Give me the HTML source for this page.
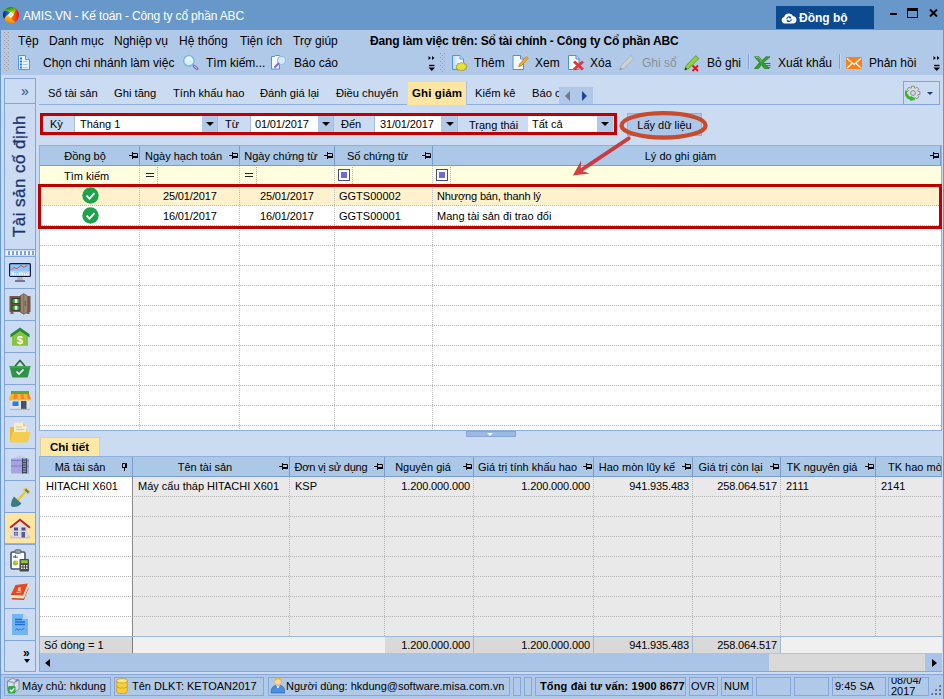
<!DOCTYPE html>
<html lang="vi">
<head>
<meta charset="utf-8">
<title>AMIS.VN - Kế toán - Công ty cổ phần ABC</title>
<style>
*{box-sizing:border-box;margin:0;padding:0}
html,body{width:944px;height:699px;overflow:hidden;background:#b1c9e8}
body{font-family:"Liberation Sans",sans-serif;font-size:12px;color:#000;position:relative}
.abs{position:absolute}
.t{position:absolute;white-space:nowrap;line-height:16px}
#title{left:0;top:0;width:944px;height:30px;background:#6898c9}
#title .cap{left:23px;top:8px;color:#fff;font-size:12px;letter-spacing:-0.15px}
#sync{left:776px;top:6px;width:98px;height:23px;background:#0b4a8f;color:#fff;font-weight:bold;font-size:12px}
#frameL{left:0;top:30px;width:1px;height:669px;background:#6898c9}
#frameR{left:943px;top:30px;width:1px;height:669px;background:#6898c9}
#menubg{left:1px;top:30px;width:942px;height:45px;background:#b1c9e8}
.menu{font-size:12px;top:33px}
.tb{font-size:12px;top:55px}
#work{left:1px;top:75px;width:942px;height:599px;background:#cbdbf1}
.grip{position:absolute;width:5px;height:17px;background-image:radial-gradient(circle,#8ea9cf 0.8px,transparent 1px);background-size:3px 3px}
#side{left:4px;top:78px;width:32px;height:594px;border:1px solid #82a5d9}
.sdiv{position:absolute;left:5px;width:30px;height:1px;background:#82a5d9}
.tab{font-size:11.2px;top:85px}
.g{position:absolute;font-size:11px;line-height:20px;white-space:nowrap;height:20px;overflow:hidden}
.hd{background:#acc8e7;border-right:1px solid #7a9cd3;border-bottom:1px solid #7a9cd3;text-align:center;line-height:20px}
.r{text-align:right;letter-spacing:-.12px}
.n{letter-spacing:-.14px}
.sp{position:absolute;top:677px;height:19px;border:1px solid #86a7d8;font-size:11px;line-height:17px;white-space:nowrap;overflow:hidden;background:#b1c9e8}
.lbl{position:absolute;font-size:11px;line-height:16px;white-space:nowrap;top:116px}
.inp{position:absolute;top:116px;height:16px;background:#fff;font-size:11px;line-height:16px;padding-left:4px;white-space:nowrap}
.dd{position:absolute;top:116px;height:16px;background:#b1c9e8}
.dd:after{content:"";position:absolute;left:50%;top:6px;margin-left:-4px;border:4px solid transparent;border-top:4px solid #000;border-bottom:0}
</style>
</head>
<body>
<div id="title" class="abs">
<div class="t cap">AMIS.VN - Kế toán - Công ty cổ phần ABC</div>
<div id="sync" class="abs">
<svg class="abs" style="left:5px;top:7px" width="16" height="11" viewBox="0 0 16 11"><path d="M3.800 10.500a3.300 3.300 0 0 1-.6-6.500 4.800 4.800 0 0 1 9-.8 3.700 3.700 0 0 1 .3 7.300z" fill="#fff"/><path d="M5.800 6.200a2.300 2.300 0 0 1 4-1.500M10.300 6.200a2.300 2.300 0 0 1-4 1.500" fill="none" stroke="#0b4a8f" stroke-width="1.100"/><path d="M9 3.200l1.600 2-2.300.3zM7 9.300l-1.600-2 2.300-.3z" fill="#0b4a8f"/></svg>
<div class="t" style="left:23px;top:4px">Đồng bộ</div>
</div>
<div class="abs" style="left:890px;top:13px;width:7px;height:2px;background:#000"></div>
<div class="abs" style="left:907px;top:8px;width:11px;height:10px;border:1px solid #000;border-top:3px solid #000"></div>
<svg class="abs" style="left:929px;top:9px" width="9" height="8" viewBox="0 0 9 8"><path d="M1 .5L8 7.500M8 .5L1 7.500" stroke="#000" stroke-width="2"/></svg>
</div>
<div id="frameL" class="abs"></div><div id="frameR" class="abs"></div>
<div id="menubg" class="abs"></div>
<svg class="abs" style="left:4px;top:32px" width="5" height="40" viewBox="0 0 5 40"><defs><pattern id="gp" width="5" height="4" patternUnits="userSpaceOnUse"><rect x="0" y="0" width="1" height="1" fill="#a3968f"/><rect x="4" y="0" width="1" height="1" fill="#a3968f"/><rect x="2" y="2" width="1" height="1" fill="#a3968f"/></pattern></defs><rect width="5" height="18" fill="url(#gp)"/><rect y="20" width="5" height="19" fill="url(#gp)"/></svg><svg class="abs" style="left:440px;top:53px" width="5" height="20" viewBox="0 0 5 20"><rect width="5" height="19" fill="url(#gp)"/></svg>
<div class="t menu" style="left:18px">Tệp</div>
<div class="t menu" style="left:49px">Danh mục</div>
<div class="t menu" style="left:114px">Nghiệp vụ</div>
<div class="t menu" style="left:179px">Hệ thống</div>
<div class="t menu" style="left:240px">Tiện ích</div>
<div class="t menu" style="left:293px">Trợ giúp</div>
<div class="t menu" style="left:370px;font-weight:bold;letter-spacing:-0.17px">Đang làm việc trên: Sổ tài chính - Công ty Cổ phần ABC</div>
<div class="t tb" style="left:43px">Chọn chi nhánh làm việc</div>
<div class="t tb" style="left:206px">Tìm kiếm...</div>
<div class="t tb" style="left:294px">Báo cáo</div>
<div class="t tb" style="left:474px">Thêm</div>
<div class="t tb" style="left:535px">Xem</div>
<div class="t tb" style="left:590px">Xóa</div>
<div class="t tb" style="left:642px;color:#8a8f98">Ghi sổ</div>
<div class="t tb" style="left:707px">Bỏ ghi</div>
<div class="t tb" style="left:778px">Xuất khẩu</div>
<div class="t tb" style="left:869px">Phản hồi</div>
<div id="work" class="abs"></div>
<div id="side" class="abs"></div>
<div class="sdiv" style="top:103px"></div>
<div class="sdiv" style="top:249px"></div>
<div class="t" style="left:21px;top:83px;font-size:14px;color:#2a4a8a">»</div>
<div class="t" style="left:-44px;top:166px;width:128px;text-align:center;font-size:17px;letter-spacing:.45px;line-height:20px;color:#17336e;-webkit-text-stroke:.3px #17336e;transform:rotate(-90deg)">Tài sản cố định</div>
<div class="abs" style="left:6px;top:251px;width:29px;height:4px;background:repeating-linear-gradient(90deg,#f2f6fc 0 2px,#7ea2dc 2px 4px)"></div>
<div class="sdiv" style="top:256px"></div>
<div class="sdiv" style="top:288px"></div>
<div class="sdiv" style="top:320px"></div>
<div class="sdiv" style="top:352px"></div>
<div class="sdiv" style="top:384px"></div>
<div class="sdiv" style="top:416px"></div>
<div class="sdiv" style="top:448px"></div>
<div class="sdiv" style="top:480px"></div>
<div class="sdiv" style="top:512px"></div>
<div class="sdiv" style="top:544px"></div>
<div class="sdiv" style="top:576px"></div>
<div class="sdiv" style="top:608px"></div>
<div class="sdiv" style="top:640px"></div>
<div class="abs" style="left:5px;top:513px;width:30px;height:31px;background:#fde5a2;border-bottom:1px solid #f5a04a"></div>
<div class="t" style="left:23px;top:645px;font-size:12px;font-weight:bold">»</div>
<div class="abs" style="left:24px;top:659px;border:3px solid transparent;border-top:4px solid #000;border-bottom:0"></div>
<div class="abs" style="left:39px;top:104px;width:864px;height:1px;background:#8fb0dc"></div>
<div class="abs" style="left:407px;top:81px;width:60px;height:24px;background:#fde6a2;border:1px solid #f3d88c;border-right-color:#a9c0e0;border-bottom:0"></div>
<div class="t tab" style="left:48px">Sổ tài sản</div>
<div class="t tab" style="left:114px">Ghi tăng</div>
<div class="t tab" style="left:173px">Tính khấu hao</div>
<div class="t tab" style="left:260px">Đánh giá lại</div>
<div class="t tab" style="left:336px">Điều chuyển</div>
<div class="t tab" style="left:412px;font-weight:bold;font-size:11.5px;letter-spacing:.1px">Ghi giảm</div>
<div class="t tab" style="left:475px">Kiểm kê</div>
<div class="t tab" style="left:532px">Báo c</div>
<div class="abs" style="left:559px;top:87px;width:34px;height:17px;background:#afc8e7"></div>
<div class="abs" style="left:565px;top:91px;border:5px solid transparent;border-right:5px solid #707a88;border-left:0"></div>
<div class="abs" style="left:582px;top:91px;border:5px solid transparent;border-left:5px solid #1a469c;border-right:0"></div>
<div class="abs" style="left:903px;top:81px;width:37px;height:24px;border:1px solid #82a5d9"></div>
<svg class="abs" style="left:905px;top:85px" width="16" height="17" viewBox="0 0 16 17"><path d="M6.32 3.08L6.62 1.14L9.38 1.14L9.68 3.08L10.29 3.33L11.88 2.17L13.83 4.12L12.67 5.71L12.92 6.32L14.86 6.62L14.86 9.38L12.92 9.68L12.67 10.29L13.83 11.88L11.88 13.83L10.29 12.67L9.68 12.92L9.38 14.86L6.62 14.86L6.32 12.92L5.71 12.67L4.12 13.83L2.17 11.88L3.33 10.29L3.08 9.68L1.14 9.38L1.14 6.62L3.08 6.32L3.33 5.71L2.17 4.12L4.12 2.17L5.71 3.33z" fill="#dcdcdc" stroke="#8c8c8c" stroke-width="1"/><circle cx="8" cy="8" r="2.400" fill="#cbdbf1" stroke="#8c8c8c" stroke-width="1"/><path d="M.8 5.500q-.8 6.500 5.500 8.300" fill="none" stroke="#2eb82e" stroke-width="2.600"/><path d="M5.500 10.800l5 2.700-5 2.700z" fill="#2eb82e"/></svg>
<div class="abs" style="left:927px;top:92px;border:3px solid transparent;border-top:3px solid #1a3a8a;border-bottom:0"></div>
<div class="abs" style="left:40px;top:113px;width:577px;height:22px;border:3px solid #c00000"></div>
<div class="lbl" style="left:50px">Kỳ</div>
<div class="inp" style="left:75px;width:127px;padding-left:5px">Tháng 1</div><div class="dd" style="left:202px;width:16px"></div>
<div class="lbl" style="left:225px">Từ</div>
<div class="inp n" style="left:251px;width:67px;padding-left:4px">01/01/2017</div><div class="dd" style="left:318px;width:16px"></div>
<div class="lbl" style="left:341px">Đến</div>
<div class="inp n" style="left:375px;width:66px;padding-left:5px">31/01/2017</div><div class="dd" style="left:441px;width:17px"></div>
<div class="lbl" style="left:469px;top:117px">Trạng thái</div>
<div class="inp" style="left:528px;width:69px">Tất cả</div><div class="dd" style="left:597px;width:16px"></div>
<div class="abs" style="left:74px;top:116px;width:1px;height:16px;background:#a3bde4"></div>
<div class="abs" style="left:217px;top:116px;width:1px;height:16px;background:#a3bde4"></div>
<div class="abs" style="left:250px;top:116px;width:1px;height:16px;background:#a3bde4"></div>
<div class="abs" style="left:333px;top:116px;width:1px;height:16px;background:#a3bde4"></div>
<div class="abs" style="left:374px;top:116px;width:1px;height:16px;background:#a3bde4"></div>
<div class="abs" style="left:457px;top:116px;width:1px;height:16px;background:#a3bde4"></div>
<div class="abs" style="left:627px;top:113px;width:75px;height:23px;border:1px solid #8fb0dc;background:#adc7ea;font-size:11px;line-height:23px;text-align:center">Lấy dữ liệu</div>
<div class="abs" style="left:39px;top:145px;width:903px;height:286px;background:#fff;border:1px solid #8fb0dc"></div>
<div class="abs" style="left:40px;top:166px;width:901px;height:264px;background-image:repeating-linear-gradient(90deg,#b4b4b4 0 1px,transparent 1px 2px);-webkit-mask-image:repeating-linear-gradient(180deg,transparent 0 19px,#000 19px 20px);mask-image:repeating-linear-gradient(180deg,transparent 0 19px,#000 19px 20px)"></div>
<div class="g hd" style="left:40px;top:146px;width:100px;padding-right:9px">Đồng bộ</div>
<svg class="abs" style="left:129px;top:152px" width="9" height="7" viewBox="0 0 9 7"><path d="M0 3.500h3.500M3.500 0v7M4 1.500h4.500v4" stroke="#000" stroke-width="1" fill="none"/><path d="M4 4h5v2H4z" fill="#000"/></svg>
<div class="g hd" style="left:140px;top:146px;width:100px;padding-right:12px">Ngày hạch toán</div>
<svg class="abs" style="left:229px;top:152px" width="9" height="7" viewBox="0 0 9 7"><path d="M0 3.500h3.500M3.500 0v7M4 1.500h4.500v4" stroke="#000" stroke-width="1" fill="none"/><path d="M4 4h5v2H4z" fill="#000"/></svg>
<div class="g hd" style="left:240px;top:146px;width:95px;padding-right:12px">Ngày chứng từ</div>
<svg class="abs" style="left:324px;top:152px" width="9" height="7" viewBox="0 0 9 7"><path d="M0 3.500h3.500M3.500 0v7M4 1.500h4.500v4" stroke="#000" stroke-width="1" fill="none"/><path d="M4 4h5v2H4z" fill="#000"/></svg>
<div class="g hd" style="left:335px;top:146px;width:98px;padding-right:12px">Số chứng từ</div>
<svg class="abs" style="left:422px;top:152px" width="9" height="7" viewBox="0 0 9 7"><path d="M0 3.500h3.500M3.500 0v7M4 1.500h4.500v4" stroke="#000" stroke-width="1" fill="none"/><path d="M4 4h5v2H4z" fill="#000"/></svg>
<div class="g hd" style="left:433px;top:146px;width:508px;padding-right:12px">Lý do ghi giảm</div>
<svg class="abs" style="left:930px;top:152px" width="9" height="7" viewBox="0 0 9 7"><path d="M0 3.500h3.500M3.500 0v7M4 1.500h4.500v4" stroke="#000" stroke-width="1" fill="none"/><path d="M4 4h5v2H4z" fill="#000"/></svg>
<div class="abs" style="left:40px;top:166px;width:901px;height:19px;background:#ffffe0"></div>
<div class="abs" style="left:40px;top:186px;width:901px;height:19px;background:#fff1cc"></div>
<div class="abs" style="left:139px;top:166px;width:1px;height:264px;background-image:repeating-linear-gradient(180deg,#bdbdbd 0 1px,transparent 1px 2px)"></div>
<div class="abs" style="left:239px;top:166px;width:1px;height:264px;background-image:repeating-linear-gradient(180deg,#bdbdbd 0 1px,transparent 1px 2px)"></div>
<div class="abs" style="left:334px;top:166px;width:1px;height:264px;background-image:repeating-linear-gradient(180deg,#bdbdbd 0 1px,transparent 1px 2px)"></div>
<div class="abs" style="left:432px;top:166px;width:1px;height:264px;background-image:repeating-linear-gradient(180deg,#bdbdbd 0 1px,transparent 1px 2px)"></div>
<div class="g" style="left:64px;top:166px">Tìm kiếm</div>
<div class="abs" style="left:146px;top:173px;width:8px;height:4px;border-top:1px solid #222;border-bottom:1px solid #222"></div>
<div class="abs" style="left:157px;top:167px;width:1px;height:18px;background-image:repeating-linear-gradient(180deg,#b4b4b4 0 1px,transparent 1px 2px)"></div>
<div class="abs" style="left:245px;top:173px;width:8px;height:4px;border-top:1px solid #222;border-bottom:1px solid #222"></div>
<div class="abs" style="left:256px;top:167px;width:1px;height:18px;background-image:repeating-linear-gradient(180deg,#b4b4b4 0 1px,transparent 1px 2px)"></div>
<div class="abs" style="left:338px;top:169px;width:12px;height:12px;border:1px solid #4a4a8c;background:#fff"><div class="abs" style="left:2px;top:2px;width:6px;height:6px;background:#6c6cd2"></div></div>
<div class="abs" style="left:352px;top:167px;width:1px;height:18px;background-image:repeating-linear-gradient(180deg,#b4b4b4 0 1px,transparent 1px 2px)"></div>
<div class="abs" style="left:436px;top:169px;width:12px;height:12px;border:1px solid #4a4a8c;background:#fff"><div class="abs" style="left:2px;top:2px;width:6px;height:6px;background:#6c6cd2"></div></div>
<div class="abs" style="left:450px;top:167px;width:1px;height:18px;background-image:repeating-linear-gradient(180deg,#b4b4b4 0 1px,transparent 1px 2px)"></div>
<svg class="abs" style="left:81.500px;top:186.6px" width="17" height="17" viewBox="0 0 17 17"><circle cx="8.5" cy="8.5" r="8.200" fill="#1ba44b"/><path d="M4.500 8.700l3 3 5-5.500" stroke="#fff" stroke-width="1.800" fill="none"/></svg>
<div class="g n" style="left:163px;top:186px">25/01/2017</div>
<div class="g n" style="left:260px;top:186px">25/01/2017</div>
<div class="g" style="left:339px;top:186px">GGTS00002</div>
<div class="g" style="left:437px;top:186px;letter-spacing:-0.15px">Nhượng bán, thanh lý</div>
<svg class="abs" style="left:81.500px;top:206.6px" width="17" height="17" viewBox="0 0 17 17"><circle cx="8.5" cy="8.5" r="8.200" fill="#1ba44b"/><path d="M4.500 8.700l3 3 5-5.500" stroke="#fff" stroke-width="1.800" fill="none"/></svg>
<div class="g n" style="left:163px;top:206px">16/01/2017</div>
<div class="g n" style="left:260px;top:206px">16/01/2017</div>
<div class="g" style="left:339px;top:206px">GGTS00001</div>
<div class="g" style="left:437px;top:206px;letter-spacing:0px">Mang tài sản đi trao đổi</div>
<div class="abs" style="left:38px;top:184px;width:904px;height:45px;border:3px solid #c00000"></div>
<svg class="abs" style="left:560px;top:100px" width="160" height="90" viewBox="0 0 160 90"><ellipse cx="103.600" cy="25.400" rx="42" ry="12.200" fill="none" stroke="#c84b2d" stroke-width="4.300"/><g opacity=".9"><path d="M68.700 38.300L21.500 69.800" stroke="#cb2d32" stroke-width="3.800" stroke-linecap="round"/><path d="M12.800 75.600L21.300 60.400 20.600 70.400 29.700 73.400z" fill="#cb2d32"/></g></svg>
<div class="abs" style="left:466px;top:431px;width:50px;height:6px;background:#9db9e1;border:1px solid #86a7d8"></div>
<div class="abs" style="left:487px;top:433px;border:3px solid transparent;border-top:3px solid #fff;border-bottom:0"></div>
<div class="abs" style="left:40px;top:437px;width:60px;height:20px;background:#fde8a6;border:1px solid #e0cf9a;border-bottom:0"></div>
<div class="t" style="left:50px;top:439px;font-size:11.5px;font-weight:bold">Chi tiết</div>
<div class="abs" style="left:39px;top:456px;width:903px;height:197px;background:#e9e9e9;border:1px solid #8fb0dc;border-right:0"></div>
<div class="abs" style="left:40px;top:477px;width:92px;height:159px;background:#fff"></div>
<div class="abs" style="left:40px;top:477px;width:902px;height:160px;background-image:repeating-linear-gradient(90deg,#b4b4b4 0 1px,transparent 1px 2px);-webkit-mask-image:repeating-linear-gradient(180deg,transparent 0 19px,#000 19px 20px);mask-image:repeating-linear-gradient(180deg,transparent 0 19px,#000 19px 20px)"></div>
<div class="g hd" style="left:40px;top:457px;width:93px;padding-right:12px">Mã tài sản</div>
<svg class="abs" style="left:121px;top:462px" width="7" height="9" viewBox="0 0 7 9"><path d="M3.500 9v-3M1 5.500h5M1.500 5.500v-4h3v4M5.500 5.500v-4.500" stroke="#000" stroke-width="1" fill="none"/></svg>
<div class="g hd" style="left:133px;top:457px;width:157px;padding-right:12px">Tên tài sản</div>
<svg class="abs" style="left:279px;top:463px" width="9" height="7" viewBox="0 0 9 7"><path d="M0 3.500h3.500M3.500 0v7M4 1.500h4.500v4" stroke="#000" stroke-width="1" fill="none"/><path d="M4 4h5v2H4z" fill="#000"/></svg>
<div class="g hd" style="left:290px;top:457px;width:95px;padding-right:12px;letter-spacing:-.2px">Đơn vị sử dụng</div>
<svg class="abs" style="left:374px;top:463px" width="9" height="7" viewBox="0 0 9 7"><path d="M0 3.500h3.500M3.500 0v7M4 1.500h4.500v4" stroke="#000" stroke-width="1" fill="none"/><path d="M4 4h5v2H4z" fill="#000"/></svg>
<div class="g hd" style="left:385px;top:457px;width:89px;padding-right:12px">Nguyên giá</div>
<svg class="abs" style="left:463px;top:463px" width="9" height="7" viewBox="0 0 9 7"><path d="M0 3.500h3.500M3.500 0v7M4 1.500h4.500v4" stroke="#000" stroke-width="1" fill="none"/><path d="M4 4h5v2H4z" fill="#000"/></svg>
<div class="g hd" style="left:474px;top:457px;width:120px;padding-right:12px">Giá trị tính khấu hao</div>
<svg class="abs" style="left:583px;top:463px" width="9" height="7" viewBox="0 0 9 7"><path d="M0 3.500h3.500M3.500 0v7M4 1.500h4.500v4" stroke="#000" stroke-width="1" fill="none"/><path d="M4 4h5v2H4z" fill="#000"/></svg>
<div class="g hd" style="left:594px;top:457px;width:99px;padding-right:12px">Hao mòn lũy kế</div>
<svg class="abs" style="left:682px;top:463px" width="9" height="7" viewBox="0 0 9 7"><path d="M0 3.500h3.500M3.500 0v7M4 1.500h4.500v4" stroke="#000" stroke-width="1" fill="none"/><path d="M4 4h5v2H4z" fill="#000"/></svg>
<div class="g hd" style="left:693px;top:457px;width:88px;padding-right:12px">Giá trị còn lại</div>
<svg class="abs" style="left:770px;top:463px" width="9" height="7" viewBox="0 0 9 7"><path d="M0 3.500h3.500M3.500 0v7M4 1.500h4.500v4" stroke="#000" stroke-width="1" fill="none"/><path d="M4 4h5v2H4z" fill="#000"/></svg>
<div class="g hd" style="left:781px;top:457px;width:95px;padding-right:12px">TK nguyên giá</div>
<svg class="abs" style="left:865px;top:463px" width="9" height="7" viewBox="0 0 9 7"><path d="M0 3.500h3.500M3.500 0v7M4 1.500h4.500v4" stroke="#000" stroke-width="1" fill="none"/><path d="M4 4h5v2H4z" fill="#000"/></svg>
<div class="g hd" style="left:876px;top:457px;width:66px;padding-right:0px;text-align:left;padding-left:12px">TK hao mòn</div>
<div class="abs" style="left:132px;top:477px;width:1px;height:177px;background:#8a8a8a"></div>
<div class="abs" style="left:289px;top:477px;width:1px;height:159px;background-image:repeating-linear-gradient(180deg,#b4b4b4 0 1px,transparent 1px 2px)"></div>
<div class="abs" style="left:384px;top:477px;width:1px;height:159px;background-image:repeating-linear-gradient(180deg,#b4b4b4 0 1px,transparent 1px 2px)"></div>
<div class="abs" style="left:473px;top:477px;width:1px;height:159px;background-image:repeating-linear-gradient(180deg,#b4b4b4 0 1px,transparent 1px 2px)"></div>
<div class="abs" style="left:593px;top:477px;width:1px;height:159px;background-image:repeating-linear-gradient(180deg,#b4b4b4 0 1px,transparent 1px 2px)"></div>
<div class="abs" style="left:692px;top:477px;width:1px;height:159px;background-image:repeating-linear-gradient(180deg,#b4b4b4 0 1px,transparent 1px 2px)"></div>
<div class="abs" style="left:780px;top:477px;width:1px;height:159px;background-image:repeating-linear-gradient(180deg,#b4b4b4 0 1px,transparent 1px 2px)"></div>
<div class="abs" style="left:875px;top:477px;width:1px;height:159px;background-image:repeating-linear-gradient(180deg,#b4b4b4 0 1px,transparent 1px 2px)"></div>
<div class="g" style="left:46px;top:476px">HITACHI X601</div>
<div class="g" style="left:138px;top:476px">Máy cẩu tháp HITACHI X601</div>
<div class="g" style="left:295px;top:476px">KSP</div>
<div class="g r" style="left:384px;top:476px;width:86px">1.200.000.000</div>
<div class="g r" style="left:472px;top:476px;width:118px">1.200.000.000</div>
<div class="g r" style="left:594px;top:476px;width:95px">941.935.483</div>
<div class="g r" style="left:693px;top:476px;width:84px">258.064.517</div>
<div class="g" style="left:786px;top:476px">2111</div>
<div class="g" style="left:881px;top:476px">2141</div>
<div class="abs" style="left:40px;top:636px;width:902px;height:17px;background:#f0f0f0;border-top:1px solid #9fb7d8"></div>
<div class="abs" style="left:40px;top:637px;width:93px;height:16px;background:#d9d9d9;border-right:1px solid #7e7e7e"></div>
<div class="abs" style="left:385px;top:637px;width:89px;height:16px;background:#d9d9d9;border-right:1px solid #9fb7d8"></div>
<div class="abs" style="left:474px;top:637px;width:120px;height:16px;background:#d9d9d9;border-right:1px solid #9fb7d8"></div>
<div class="abs" style="left:594px;top:637px;width:99px;height:16px;background:#d9d9d9;border-right:1px solid #9fb7d8"></div>
<div class="abs" style="left:693px;top:637px;width:88px;height:16px;background:#d9d9d9;border-right:1px solid #9fb7d8"></div>
<div class="g" style="left:44px;top:635px">Số dòng = 1</div>
<div class="g r" style="left:384px;top:635px;width:86px">1.200.000.000</div>
<div class="g r" style="left:472px;top:635px;width:118px">1.200.000.000</div>
<div class="g r" style="left:594px;top:635px;width:95px">941.935.483</div>
<div class="g r" style="left:693px;top:635px;width:84px">258.064.517</div>
<div class="abs" style="left:39px;top:653px;width:903px;height:19px;background:#aac4e8;border:1px solid #86a7d8;border-top:0;border-right:0"></div>
<div class="abs" style="left:769px;top:654px;width:156px;height:17px;background:#d9d9d9"></div>
<div class="abs" style="left:45px;top:659px;border:4px solid transparent;border-right:5px solid #000;border-left:0"></div>
<div class="abs" style="left:932px;top:659px;border:4px solid transparent;border-left:5px solid #000;border-right:0"></div>
<div class="abs" style="left:1px;top:674px;width:942px;height:25px;background:#b1c9e8;border-top:1px solid #86a7d8"></div>
<div class="sp" style="left:4px;width:107px;padding-left:17px">Máy chủ: hkdung</div>
<div class="sp" style="left:114px;width:150px;padding-left:17px">Tên DLKT: KETOAN2017</div>
<div class="sp" style="left:268px;width:242px;padding-left:17px">Người dùng: hkdung@software.misa.com.vn</div>
<div class="sp" style="left:513px;width:8px;padding-left:0px"></div>
<div class="sp" style="left:524px;width:8px;padding-left:0px"></div>
<div class="sp" style="left:535px;width:151px;padding-left:4px"><b style="letter-spacing:.14px">Tổng đài tư vấn: 1900 8677</b></div>
<div class="sp" style="left:689px;width:29px;padding-left:1px">OVR</div>
<div class="sp" style="left:721px;width:32px;padding-left:2px">NUM</div>
<div class="sp" style="left:756px;width:35px;padding-left:0px"></div>
<div class="sp" style="left:794px;width:35px;padding-left:0px"></div>
<div class="sp" style="left:832px;width:54px;padding-left:2px">9:45 SA</div>
<div class="sp" style="left:888px;width:41px;padding-left:2px"><span style="display:block;line-height:11px;margin-top:-3px;white-space:normal">08/04/ 2017</span></div>
<div class="abs" style="left:930px;top:684px;width:11px;height:11px;background-image:radial-gradient(circle,#5a6f95 0.9px,transparent 1.100px);background-size:4px 4px;clip-path:polygon(100% 0,100% 100%,0 100%)"></div>
<svg class="abs" style="left:3px;top:7px" width="16" height="16" viewBox="0 0 16 16" preserveAspectRatio="none"><defs><linearGradient id="lp0" gradientUnits="userSpaceOnUse" x1="6.3" y1="0.2" x2="7.8" y2="7.0"><stop offset="0" stop-color="#118a1e"/><stop offset="1" stop-color="#e6e000"/></linearGradient><linearGradient id="lp1" gradientUnits="userSpaceOnUse" x1="16.0" y1="8.3" x2="9.0" y2="8.0"><stop offset="0" stop-color="#e60a0a"/><stop offset="1" stop-color="#ff7a10"/></linearGradient><linearGradient id="lp2" gradientUnits="userSpaceOnUse" x1="5.9" y1="15.7" x2="7.7" y2="9.0"><stop offset="0" stop-color="#ff7e00"/><stop offset="1" stop-color="#ffd21a"/></linearGradient><linearGradient id="lp3" gradientUnits="userSpaceOnUse" x1="0.0" y1="8.0" x2="7.0" y2="8.0"><stop offset="0" stop-color="#0b1c9c"/><stop offset="1" stop-color="#1f8fe6"/></linearGradient></defs><path d="M8 8Q7.62 3.62 1.07 4.00A8 8 0 0 1 12.59 1.45Q12.40 8.00 8 8z" fill="url(#lp0)"/><path d="M8 8Q12.40 8.00 12.59 1.45A8 8 0 0 1 12.00 14.93Q6.14 11.99 8 8z" fill="url(#lp1)"/><path d="M8 8Q6.14 11.99 12.00 14.93A8 8 0 0 1 1.07 12.00Q4.01 6.14 8 8z" fill="url(#lp2)"/><path d="M8 8Q4.01 6.14 1.07 12.00A8 8 0 0 1 1.07 4.00Q7.62 3.62 8 8z" fill="url(#lp3)"/><path d="M8 4.800l3 3-3.200 3.200-3-3z" fill="#fff"/><path d="M8 6.800l1.200 1.200-1.200 1.200-1.200-1.200z" fill="#d9dbe6"/></svg>
<svg class="abs" style="left:18px;top:55px" width="12" height="15" viewBox="0 0 12 15" preserveAspectRatio="none"><path d="M.5 .5h7l4 4v10H.5z" fill="#e6f2ff" stroke="#4f96e0"/><path d="M7.500 .5v4h4" fill="#cfe3fa" stroke="#4f96e0"/><path d="M2 2.500h2v2H2zM2 5.500h2v2H2zM2 8.500h2v2H2zM2 11.500h2v2H2z" fill="#2f7ad0"/><path d="M5 6.500h4.500M5 9.500h4.500M5 12.500h4.500" stroke="#9cc6f0" stroke-width="1"/></svg>
<svg class="abs" style="left:182px;top:54px" width="18" height="18" viewBox="0 0 18 18" preserveAspectRatio="none"><defs><linearGradient id="lg1" x1="0" y1="0" x2="0" y2="1"><stop offset="0" stop-color="#f6fbff"/><stop offset="1" stop-color="#c9ecf6"/></linearGradient></defs><circle cx="6.900" cy="6.900" r="5.200" fill="url(#lg1)" stroke="#74b2ea" stroke-width="1.300"/><path d="M12 12l3 2.700" stroke="#8572d6" stroke-width="3" stroke-linecap="round"/><path d="M12.300 12.200l2.500 2.200" stroke="#c4b6f2" stroke-width="1" stroke-linecap="round"/></svg>
<svg class="abs" style="left:271px;top:55px" width="16" height="16" viewBox="0 0 16 16" preserveAspectRatio="none"><path d="M.5 1.500h3l1-1h4l1 1v3l-1 1v8.500h-8z" fill="#f4f9ff" stroke="#4f90d8"/><circle cx="10.500" cy="5.500" r="4" fill="#d6ecfb" stroke="#8dbfe8" stroke-width="1.200"/><path d="M7.500 8.500L4 12" stroke="#7d6ccc" stroke-width="2" stroke-linecap="round"/></svg>
<svg class="abs" style="left:428px;top:56px" width="8" height="15" viewBox="0 0 8 15" preserveAspectRatio="none"><path d="M.5 0l2.500 2-2.500 2zM4 0l2.500 2L4 4z" fill="#000"/><path d="M1 9.500h5.500" stroke="#000" stroke-width="1.400"/><path d="M.5 11.500h6.500L3.750 15z" fill="#000"/></svg>
<svg class="abs" style="left:933px;top:56px" width="8" height="15" viewBox="0 0 8 15" preserveAspectRatio="none"><path d="M.5 0l2.500 2-2.500 2zM4 0l2.500 2L4 4z" fill="#000"/><path d="M1 9.500h5.500" stroke="#000" stroke-width="1.400"/><path d="M.5 11.500h6.500L3.750 15z" fill="#000"/></svg>
<svg class="abs" style="left:452px;top:55px" width="16" height="16" viewBox="0 0 16 16" preserveAspectRatio="none"><defs><linearGradient id="lg2" x1="0" y1="0" x2="1" y2="0"><stop offset="0" stop-color="#b9d8f8"/><stop offset=".6" stop-color="#f4f9ff"/></linearGradient></defs><path d="M.5 .5h7.500l3.500 3.500v10.500H.5z" fill="url(#lg2)" stroke="#4f96e0"/><path d="M8 .5v3.500h3.500" fill="#cfe3fa" stroke="#4f96e0"/><path d="M9 7.200l1.300 1.200 1.700-.9.500 1.600 1.900.1-.6 1.500 1.500 1-1.500 1 .5 1.500-1.900.1-.6 1.500-1.600-.9-1.400 1.200-1.200-1.300-1.800.6-.2-1.700-1.800-.5 1-1.300-1-1.400 1.800-.5.300-1.700 1.800.5z" fill="#e6e23c" stroke="#9a9220" stroke-width=".7"/></svg>
<svg class="abs" style="left:512px;top:55px" width="17" height="16" viewBox="0 0 17 16" preserveAspectRatio="none"><path d="M1 .5h7.500l3 3v11H1z" fill="#f4f9ff" stroke="#4f90d8"/><path d="M8.500 .5v3.500h3" fill="#cfe3fa" stroke="#4f90d8"/><path d="M14.500 1.500l1.800 1.800-7 7.500-2.600 1 .8-2.700z" fill="#f5b021" stroke="#c07a10" stroke-width=".7"/></svg>
<svg class="abs" style="left:568px;top:55px" width="17" height="16" viewBox="0 0 17 16" preserveAspectRatio="none"><path d="M.5 .5h7.500l3 3v11H.5z" fill="#f4f9ff" stroke="#4f90d8"/><path d="M8 .5v3.500h3" fill="#cfe3fa" stroke="#4f90d8"/><path d="M6 6.500l9 8M15 6.500l-9 8" stroke="#e0383a" stroke-width="3"/></svg>
<svg class="abs" style="left:618px;top:55px" width="17" height="16" viewBox="0 0 17 16" preserveAspectRatio="none"><path d="M12.800 .6l3 3-9.800 9.800-4.400 1.600 1.600-4.400z" fill="#cfd0d2" stroke="#a9abb0" stroke-width=".8"/><path d="M1.600 15l1-2.600 1.600 1.600z" fill="#8c8f94"/></svg>
<svg class="abs" style="left:683px;top:55px" width="18" height="17" viewBox="0 0 18 17" preserveAspectRatio="none"><path d="M12.800 .6l3 3-9.800 9.800-4.400 1.600 1.600-4.400z" fill="#8fd13c" stroke="#4f9418" stroke-width=".8"/><path d="M1.600 15l1-2.600 1.600 1.600z" fill="#222"/><path d="M9.500 10.500l5.500 5.500M15 10.500l-5.500 5.500" stroke="#e01010" stroke-width="1.800"/></svg>
<div class="abs" style="left:748px;top:54px;width:1px;height:15px;background:#7fa3d8"></div><div class="abs" style="left:749px;top:54px;width:1px;height:15px;background:#c4d6f0"></div>
<div class="abs" style="left:839px;top:54px;width:1px;height:15px;background:#7fa3d8"></div><div class="abs" style="left:840px;top:54px;width:1px;height:15px;background:#c4d6f0"></div>
<svg class="abs" style="left:754px;top:56px" width="17" height="13" viewBox="0 0 17 13" preserveAspectRatio="none"><path d="M9 7.500h7.500M9.500 9.500h7M10.500 11.500h6" stroke="#2c8a26" stroke-width="1"/><path d="M.5 .8h4.500l3 3.700 4-3.700h4L9.500 6.500l5.500 6h-4.500L7.500 8.800 4.500 12.500H.5l5-6z" fill="#34a02c" stroke="#1c6a18" stroke-width=".6"/><path d="M2 1.500h2.500l3.200 4" stroke="#8fdc80" stroke-width=".8" fill="none"/></svg>
<svg class="abs" style="left:846px;top:57px" width="16" height="12" viewBox="0 0 16 12" preserveAspectRatio="none"><rect width="16" height="12" rx="1" fill="#f58220"/><path d="M1 1.500l7 6 7-6M1 11l5.500-5M15 11l-5.500-5" stroke="#fff" stroke-width="1.200" fill="none"/></svg>
<svg class="abs" style="left:9px;top:263px" width="22" height="20" viewBox="0 0 22 20" preserveAspectRatio="none"><rect x=".6" y=".6" width="20.800" height="12.800" rx="1" fill="#8fc3fb" stroke="#14183c" stroke-width="1.200"/><rect x="1.200" y="8" width="19.600" height="4.800" fill="#a9d2fc"/><path d="M3 12.300V9M4.500 12.300V8.500M6.500 12.300v-2M8.500 12.300v-1.500M10.500 12.300V9.500M12 12.300V9M13.500 12.300V9.500M15.500 12.300v-2.500M17.500 12.300V10M19 12.300V9" stroke="#fff" stroke-width="1"/><path d="M2.500 6.500l2.500-2 3 1.200 4-3.300 3 2 3.500-2.400" stroke="#d4543e" stroke-width="1" fill="none"/><path d="M8.500 14h5l.5 3h-6z" fill="#b4b4b0"/><path d="M6.500 18h9" stroke="#14183c" stroke-width="1.200" stroke-linecap="round"/></svg>
<svg class="abs" style="left:9px;top:293px" width="22" height="22" viewBox="0 0 22 22" preserveAspectRatio="none"><path d="M.5 3h21v16H.5z" fill="#6f5a4c"/><path d="M2.500 5h9.500v12.500H2.500z" fill="#3a2e28"/><path d="M2.500 10.600h9.500v1.200H2.500z" fill="#6f5a4c"/><path d="M3.500 6h7v4h-7zM3.500 12.800h7v4h-7z" fill="#3aa04a"/><path d="M5.800 6h2.600v4H5.800zM5.800 12.800h2.600v4H5.800z" fill="#dff3dc"/><path d="M11.500 2.500l3.200-1.800 4 2.300v16l-4 2.200-3.200-1.800z" fill="#9a8472" stroke="#6a5648" stroke-width=".7"/><path d="M14.700 .7v20.500" stroke="#7a6656" stroke-width=".8"/><path d="M16.200 8v5" stroke="#6a5648" stroke-width="1"/><path d="M1.500 19h3v2h-3zM17.500 19h3v2h-3z" fill="#7a6656"/></svg>
<svg class="abs" style="left:10px;top:327px" width="20" height="19" viewBox="0 0 20 19" preserveAspectRatio="none"><path d="M2 8L10 2.500 18 8v10.800H2z" fill="#86c440"/><path d="M10 .4l9.600 6.800v3.400L10 3.900 .4 10.600V7.200z" fill="#2a8a3a"/><text x="10" y="17.300" font-family="Liberation Sans,sans-serif" font-size="11.500" font-weight="bold" fill="#fff" text-anchor="middle">$</text></svg>
<svg class="abs" style="left:9px;top:359px" width="22" height="19" viewBox="0 0 22 19" preserveAspectRatio="none"><path d="M5 8.500l6-7 6 7" fill="none" stroke="#1e6a30" stroke-width="1.600"/><path d="M.5 7h21l-2.500 10.500q-.3 1-1.500 1h-13q-1.200 0-1.500-1z" fill="#2f9246"/><path d="M.5 7h21l-.5 2H1z" fill="#3aa652"/><path d="M7.500 12.500l2.500 2.500 4.500-4.500" stroke="#fff" stroke-width="1.600" fill="none"/></svg>
<svg class="abs" style="left:9px;top:391px" width="22" height="19" viewBox="0 0 22 19" preserveAspectRatio="none"><rect x="2" y="0" width="18" height="3" fill="#5aa83c"/><path d="M2 3h18l2 5H0z" fill="#f7b52c"/><path d="M5.500 3h3l-.5 5H4zM11.500 3h3l1 5h-3.500zM17.500 3h2.500l2 5h-3z" fill="#f0862a"/><path d="M0 8a1.800 1.800 0 0 0 3.670 0a1.800 1.800 0 0 0 3.670 0a1.800 1.800 0 0 0 3.670 0a1.800 1.800 0 0 0 3.670 0a1.800 1.800 0 0 0 3.670 0a1.800 1.800 0 0 0 3.670 0z" fill="#f7b52c"/><rect x="1.500" y="9.800" width="19" height="8" fill="#dfe3e8"/><rect x="3.500" y="10.500" width="6" height="4.500" fill="#2a7de0"/><rect x="12" y="10" width="5.500" height="8" fill="#46525e"/><rect x="1" y="17.800" width="20" height="1.200" fill="#b0b8c0"/></svg>
<svg class="abs" style="left:9px;top:422px" width="22" height="21" viewBox="0 0 22 21" preserveAspectRatio="none"><path d="M1 5h7l2 2h8v12H1z" fill="#e9b93a"/><path d="M5 .5h9l3.500 3.500v9H5z" fill="#f6ecd0"/><path d="M14 .5v3.500h3.500z" fill="#d8c9a0"/><path d="M7 5h6M7 7.500h8" stroke="#d8c9a0" stroke-width="1"/><path d="M1 20.500l2.500-10.500h18l-3 10.500z" fill="#f5cd50"/></svg>
<svg class="abs" style="left:10px;top:455px" width="20" height="20" viewBox="0 0 20 20" preserveAspectRatio="none"><path d="M10 .5l8 3H2z" fill="#c9c6ea"/><rect x="1" y="3.500" width="18" height="15" fill="#a6a4e0"/><path d="M1 5.500h18M1 11h18" stroke="#7f7ccc" stroke-width="1"/><rect x="12" y="3.500" width="5" height="15" fill="#8a88c8"/><path d="M12.500 3.500v15M16.500 3.500v15M12.500 5h4M12.500 7.500h4M12.500 10h4M12.500 12.500h4M12.500 15h4M12.500 17.500h4" stroke="#3c4a50" stroke-width="1"/></svg>
<svg class="abs" style="left:10px;top:488px" width="20" height="20" viewBox="0 0 20 20" preserveAspectRatio="none"><path d="M8 12L16 3" stroke="#f6c21c" stroke-width="2.200"/><path d="M13.500 2.500l2-2.200 3.800 3.800-2.200 2" fill="none" stroke="#f6c21c" stroke-width="1.800"/><path d="M15.500 1.500l3 3" stroke="#3f8088" stroke-width="2"/><path d="M4 8.500l7.500 7q-3 3.500-8 3.500-3 0-2.500-3 .5-4.500 3-7.500z" fill="#3a7c84"/></svg>
<svg class="abs" style="left:9px;top:518px" width="22" height="21" viewBox="0 0 22 21" preserveAspectRatio="none"><rect x="1" y="17.500" width="20" height="3" fill="#c9c9c9"/><path d="M3 9l8-6.500L19 9v10H3z" fill="#dcdcdc"/><path d="M11 .5L21.500 9l-1.200 1.600L11 3 1.700 10.600.5 9z" fill="#b32424"/><rect x="5" y="9.500" width="4" height="3" fill="#4c4c92"/><rect x="12.500" y="9.500" width="4" height="3" fill="#4c4c92"/><rect x="5" y="14" width="4" height="3.500" fill="#4c4c92"/><rect x="12.500" y="14" width="3.500" height="5.500" fill="#5a5a8a"/><path d="M7 14v3.500M5 15.800h4" stroke="#dcdcdc" stroke-width=".6"/></svg>
<svg class="abs" style="left:10px;top:549px" width="20" height="23" viewBox="0 0 20 23" preserveAspectRatio="none"><rect x="1" y="3" width="14" height="17" rx="1.500" fill="#fff" stroke="#4a5660" stroke-width="1.600"/><rect x="5" y=".8" width="6" height="3.500" rx="1" fill="#9aa4ac" stroke="#4a5660" stroke-width=".8"/><path d="M4 9V7M5.500 9V6M7 9V7.500" stroke="#2a6fd0" stroke-width="1.200"/><circle cx="5.500" cy="14" r="2.500" fill="#8cc63f"/><path d="M5.500 14V11.500a2.500 2.500 0 0 1 2.500 2.500z" fill="#f2c230"/><rect x="9.500" y="10" width="9.500" height="12.500" rx="1" fill="#4a4a4a"/><rect x="10.800" y="11.200" width="7" height="3" fill="#8cc63f"/><path d="M11 16h1.500v1.500H11zM13.500 16H15v1.500h-1.500zM16 16h1.500v1.500H16zM11 18.500h1.500V20H11zM13.500 18.500H15V20h-1.500zM16 18.500h1.500V20H16z" fill="#e8e8e8"/></svg>
<svg class="abs" style="left:10px;top:583px" width="19" height="19" viewBox="0 0 19 19" preserveAspectRatio="none"><path d="M1 11.500L5.500 2 18 .5l-4.500 11z" fill="#e8461e"/><path d="M1 11.500l12.500.5 4.500-11.500.5 3.500-4.500 11.500L1.500 15z" fill="#f3e2c0"/><path d="M1 11.500l12.500.5" stroke="#c43a14" stroke-width="1"/><path d="M1.500 15l12.500 .5L18.500 4v1.500L14 17 2 16.500z" fill="#d8421c"/><path d="M8 4.500l3-.5-.5 2 1 1.500-4 .8.300-1.500z" fill="#f7b7a0"/><path d="M6.500 9.500l5-.6" stroke="#f7b7a0" stroke-width="1"/></svg>
<svg class="abs" style="left:12px;top:614px" width="16" height="21" viewBox="0 0 16 21" preserveAspectRatio="none"><path d="M0 0h11l5 5v16H0z" fill="#74b4f2"/><path d="M11 0v5h5z" fill="#b9d9f8"/><path d="M3 5.500h7M3 8h10M3 10.500h10" stroke="#1f6fd0" stroke-width="1.300"/><path d="M3.500 16.500q1-3 2-1.500t1 1.500q1-2 2-1t2-.5l2-.5" stroke="#1f6fd0" stroke-width=".9" fill="none"/></svg>
<svg class="abs" style="left:6px;top:678px" width="15" height="16" viewBox="0 0 15 16" preserveAspectRatio="none"><path d="M1.500 3l5-2.500 6.500 1.500v9l-5 3.500-6.500-2z" fill="#d9dde6" stroke="#7a8296" stroke-width=".8"/><path d="M1.500 3l6.500 1.800 5-2.800M8 4.800v9.500" stroke="#7a8296" stroke-width=".8" fill="none"/><path d="M9 3.500l3-1.500" stroke="#8a66c8" stroke-width="1.200"/><rect x="2" y="8" width="7.500" height="7.500" rx="1.500" fill="#2fa84a"/><path d="M3.800 11.800l1.700 1.700 2.700-3.200" stroke="#fff" stroke-width="1.300" fill="none"/></svg>
<svg class="abs" style="left:116px;top:678px" width="12" height="16" viewBox="0 0 13 17" preserveAspectRatio="none"><path d="M.8 3v11q0 2.500 5.700 2.500t5.700-2.500V3z" fill="#f7cf3a" stroke="#c89a10" stroke-width=".8"/><ellipse cx="6.500" cy="3" rx="5.700" ry="2.300" fill="#fbe686" stroke="#c89a10" stroke-width=".8"/><path d="M.8 8.500q0 2.300 5.700 2.300t5.700-2.300" fill="none" stroke="#c89a10" stroke-width=".8"/></svg>
<svg class="abs" style="left:270px;top:677px" width="15" height="17" viewBox="0 0 15 17" preserveAspectRatio="none"><circle cx="8" cy="4.500" r="3.600" fill="#f6d9a8" stroke="#c8a060" stroke-width=".6"/><path d="M4.500 3.500q1-3.500 4.500-3 3 .8 2.800 3.500-2-.3-3.500-2-1.500 1.500-3.800 1.500z" fill="#e8b830"/><path d="M1 16q0-6.500 4.500-7.500l2.500 3 2.500-3q4.500 1 4.500 7.500z" fill="#4a8ee0" stroke="#2a62b0" stroke-width=".7"/><path d="M6.500 9.500l1.500 2 1.500-2z" fill="#fff"/></svg>
</body>
</html>
